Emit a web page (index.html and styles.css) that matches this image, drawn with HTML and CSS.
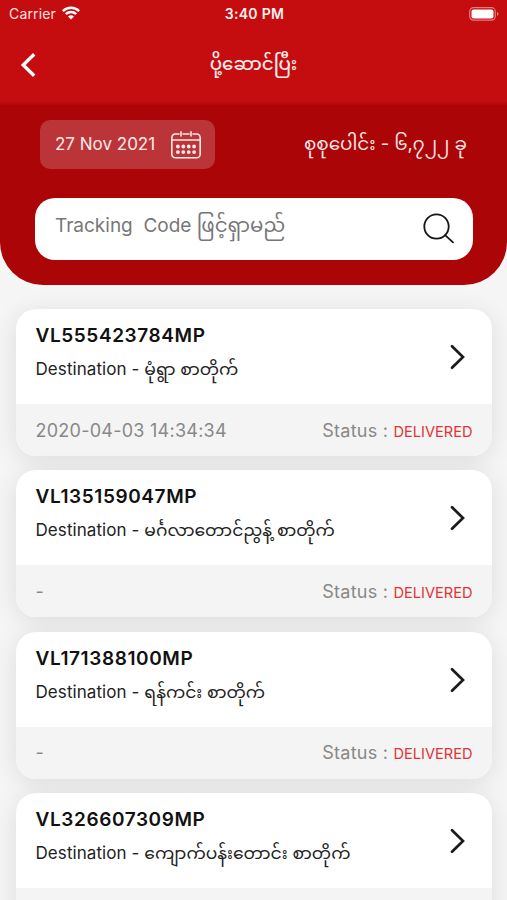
FILE: index.html
```html
<!DOCTYPE html>
<html lang="my">
<head>
<meta charset="utf-8">
<meta name="viewport" content="width=device-width, initial-scale=1">
<title>ပို့ဆောင်ပြီး</title>
<link rel="stylesheet" href="styles.css">
</head>
<body>
<svg class="defs" width="0" height="0"><symbol id="next" viewBox="0 0 16 26"><path d="M2 2.2 L13 13 L2 23.8" fill="none" stroke="#1b1b1b" stroke-width="2.7" stroke-linecap="round" stroke-linejoin="miter"/></symbol></svg>
<header class="top">
  <div class="status">
    <div class="carrier"><span>Carrier</span>
      <svg width="18" height="14" viewBox="0 0 18 14"><g fill="none" stroke="#fff" stroke-width="2.4"><path d="M.9 5.1a11.5 11.5 0 0 1 16.2 0"/><path d="M3.8 8.2a7.4 7.4 0 0 1 10.4 0"/></g><path d="M6 10.6a4.3 4.3 0 0 1 6 0L9 13.6Z" fill="#fff"/></svg>
    </div>
    <div class="clock">3:40 PM</div>
    <svg class="battery" width="31" height="14" viewBox="0 0 31 14"><rect x=".7" y=".7" width="25.6" height="12.4" rx="3.8" fill="none" stroke="#e27c7f" stroke-width="1.2"/><rect x="2.5" y="2.4" width="22" height="9" rx="2" fill="#fff"/><path d="M28 4.8q3.2 2.1 0 4.2Z" fill="#e27c7f"/></svg>
  </div>
  <div class="nav">
    <svg class="back" width="16" height="26" viewBox="0 0 16 26"><path d="M14.2 2.2 3.2 13l11 10.8" fill="none" stroke="#fff" stroke-width="3.3"/></svg>
    <h1 class="heading">ပို့ဆောင်ပြီး</h1>
  </div>
</header>
<section class="panel">
  <div class="summary">
    <div class="date"><span>27 Nov 2021</span>
      <svg width="30" height="28" viewBox="0 0 30 28"><g fill="none" stroke="#ffe9e9" stroke-width="1.6" stroke-linecap="round"><path d="M8 3H4.4A3.6 3.6 0 0 0 .8 6.600V23.200a3.600 3.600 0 0 0 3.600 3.600h21.200a3.600 3.600 0 0 0 3.600-3.600V6.600A3.600 3.600 0 0 0 25.600 3H22M12 3h6M1 9h28M10 .9v4M20 .9v4"/></g><path d="M6.900 15.500h.01M12.300 15.500h.01M17.700 15.500h.01M23.100 15.500h.01M6.900 21.100h.01M12.300 21.100h.01M17.700 21.100h.01M23.100 21.100h.01" fill="none" stroke="#ffe9e9" stroke-width="3.800" stroke-linecap="round"/></svg>
    </div>
    <div class="total">စုစုပေါင်း - ၆,၇၂၂ ခု</div>
  </div>
  <div class="search"><span class="placeholder">Tracking&nbsp; Code <span class="hint">ဖြင့်ရှာမည်</span></span>
    <svg width="32" height="32" viewBox="0 0 32 32"><g fill="none" stroke="#161616" stroke-width="1.8" stroke-linecap="round"><circle cx="13.500" cy="13.500" r="12.200"/><path d="m22.400 22.400 7.600 7"/></g></svg>
  </div>
</section>
<main class="list">
  <article class="card">
    <div class="body"><div><h2 class="code">VL555423784MP</h2><p class="dest">Destination - <span class="place">မုံရွာ စာတိုက်</span></p></div><svg class="next" width="16" height="26"><use href="#next"/></svg></div>
    <div class="foot"><span>2020-04-03 14:34:34</span><span class="state">Status : <b>DELIVERED</b></span></div>
  </article>
  <article class="card">
    <div class="body"><div><h2 class="code">VL135159047MP</h2><p class="dest">Destination - <span class="place">မင်္ဂလာတောင်ညွန့် စာတိုက်</span></p></div><svg class="next" width="16" height="26"><use href="#next"/></svg></div>
    <div class="foot"><span>-</span><span class="state">Status : <b>DELIVERED</b></span></div>
  </article>
  <article class="card">
    <div class="body"><div><h2 class="code">VL171388100MP</h2><p class="dest">Destination - <span class="place">ရန်ကင်း စာတိုက်</span></p></div><svg class="next" width="16" height="26"><use href="#next"/></svg></div>
    <div class="foot"><span>-</span><span class="state">Status : <b>DELIVERED</b></span></div>
  </article>
  <article class="card">
    <div class="body"><div><h2 class="code">VL326607309MP</h2><p class="dest">Destination - <span class="place">ကျောက်ပန်းတောင်း စာတိုက်</span></p></div><svg class="next" width="16" height="26"><use href="#next"/></svg></div>
    <div class="foot"></div>
  </article>
</main>
</body>
</html>
```
FILE: styles.css
```css
* { box-sizing: border-box; }
body { margin: 0; height: 900px; overflow: hidden; background: #f5f5f5; font-family: Inter, "Noto Sans Myanmar", "Noto Sans", sans-serif; }
h1, h2, p { margin: 0; }
.defs { display: block; height: 0; }
.top { height: 105px; background: linear-gradient(#c50c0f 101px, #b2070a 105px); color: #fff; }
.status { height: 28px; padding: 0 7px 0 9px; display: grid; grid-template-columns: 1fr auto 1fr; align-items: center; font-size: 14px; line-height: 28px; }
.carrier { display: flex; align-items: center; gap: 6px; letter-spacing: .15px; color: #ffe3e3; }
.carrier svg { margin-top: -2px; }
.clock { font-weight: 600; letter-spacing: .3px; color: #fff0f0; }
.battery { justify-self: end; margin-top: -1px; }
.nav { height: 77px; padding: 0 20px; display: grid; grid-template-columns: 1fr auto 1fr; align-items: center; }
.back { margin-bottom: 3px; }
.heading { font-size: 18.200px; font-weight: 500; line-height: 30px; white-space: nowrap; margin-bottom: 8px; color: #ffecec; }
.panel { height: 180px; padding: 15px 34px 0 35px; background: #ab0508; border-radius: 0 0 43px 43px; }
.summary { display: flex; align-items: center; justify-content: space-between; padding: 0 6px 0 5px; height: 49px; }
.date { display: flex; align-items: center; justify-content: space-between; width: 175px; height: 49px; padding: 0 14px 0 15px; border-radius: 10px; background: #bb3437; color: #ffeaea; font-size: 17px; white-space: nowrap; }
.date span { margin-bottom: 2px; }
.total { color: #ffe6e6; font-size: 18.350px; line-height: 30px; white-space: nowrap; margin-bottom: 4px; }
.search { margin-top: 29px; height: 62px; padding: 0 18px 0 20px; border-radius: 20px; background: #fff; display: flex; align-items: center; justify-content: space-between; }
.placeholder { color: #777; font-size: 19px; line-height: 30px; letter-spacing: 0; white-space: nowrap; margin-bottom: 6px; }
.hint { font-size: 19.800px; line-height: 1; letter-spacing: 0; }
.list { padding: 24px 15px 0 15.500px; display: flex; flex-direction: column; gap: 14.300px; }
.card { flex: none; height: 147px; border-radius: 20px; background: #fff; box-shadow: 0 4px 24px rgba(0, 0, 0, .1); }
.body { height: 95px; display: flex; justify-content: space-between; padding: 13px 26px 0 20px; }
.code { font-size: 19px; line-height: 28px; font-weight: 600; letter-spacing: .6px; color: #111; white-space: nowrap; }
.dest { margin-top: 5px; font-size: 17px; line-height: 28px; letter-spacing: .08px; color: #222; white-space: nowrap; }
.place { font-size: 17.150px; line-height: 1; letter-spacing: 0; }
.next { margin-top: 22px; }
.foot { height: 52px; padding: 0 19.500px 0 20px; display: flex; align-items: center; justify-content: space-between; background: #f4f4f4; border-radius: 0 0 20px 20px; color: #888; font-size: 18px; letter-spacing: .25px; white-space: nowrap; }
.state b { font-size: 14.600px; font-weight: 400; letter-spacing: 0; color: #df3336; }
```
